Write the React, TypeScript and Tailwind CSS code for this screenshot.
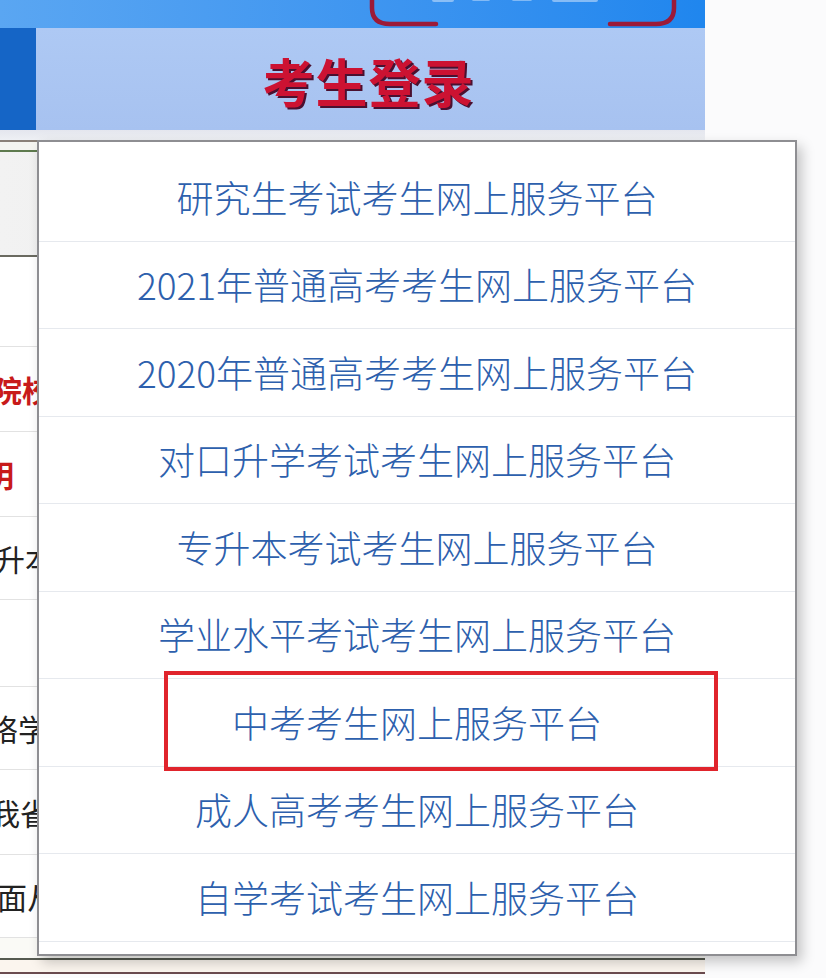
import React from "react";

const items = [
  "研究生考试考生网上服务平台",
  "2021年普通高考考生网上服务平台",
  "2020年普通高考考生网上服务平台",
  "对口升学考试考生网上服务平台",
  "专升本考试考生网上服务平台",
  "学业水平考试考生网上服务平台",
  "中考考生网上服务平台",
  "成人高考考生网上服务平台",
  "自学考试考生网上服务平台",
];

const cjk = { fontFamily: '"Noto Sans CJK SC", "Noto Sans", sans-serif' };

export default function App() {
  return (
    <div
      className="relative w-[826px] h-[978px] overflow-hidden bg-[#fbfbfc]"
      style={cjk}
    >
      {/* background page */}
      <div className="w-[705px]">
        {/* top bar */}
        <div className="relative h-[28px] bg-gradient-to-r from-[#5aa6f2] to-[#1f86ee]">
          <svg
            className="absolute left-[360px] top-0"
            width="330"
            height="28"
            viewBox="0 0 330 28"
          >
            <path
              d="M12 -4 L12 8 Q12 24 30 24 L76 24"
              fill="none"
              stroke="#9c1a38"
              strokeWidth="4.5"
              strokeLinecap="round"
            />
            <path
              d="M314 -4 L314 8 Q314 24 296 24 L250 24"
              fill="none"
              stroke="#9c1a38"
              strokeWidth="4.5"
              strokeLinecap="round"
            />
            <rect x="72" y="-2" width="22" height="4" rx="2" fill="#cfe4fb" opacity="0.55" />
            <rect x="112" y="-2" width="18" height="3" rx="1.5" fill="#cfe4fb" opacity="0.5" />
            <rect x="152" y="-2" width="20" height="3" rx="1.5" fill="#cfe4fb" opacity="0.5" />
            <rect x="192" y="-2" width="46" height="4" rx="2" fill="#cfe4fb" opacity="0.55" />
          </svg>
        </div>
        {/* banner */}
        <div className="flex h-[102px]">
          <div className="w-[36px] bg-[#1565c6]" />
          <div className="flex-1 flex items-center justify-center bg-gradient-to-b from-[#aec9f4] to-[#a7c2f0]">
            <span
              className="text-[52px] font-bold leading-none text-[#cc1232] tracking-[1px] mr-[4px] mt-[4px]"
              style={{ textShadow: "2px 2px 0 #4a1030" }}
            >
              考生登录
            </span>
          </div>
        </div>
        {/* gap */}
        <div className="h-[10px] bg-gradient-to-b from-[#e4e6ee] to-[#eef0f4]" />
        {/* table behind */}
        <div className="border-t-2 border-[#8a8078] bg-white">
          <div className="h-[10px] border-b-2 border-[#5e7a4e] bg-[#f4f4f0]" />
          <div className="h-[105px] border-b-2 border-[#6a6a60] bg-gradient-to-r from-[#f2f2f2] to-[#e6e6e6]" />
          <div className="h-[90px] border-b border-[#e2e2e2]" />
          <div className="h-[85px] border-b border-[#e2e2e2] flex items-center overflow-hidden">
            <span className="ml-[-8px] text-[30px] font-bold text-[#c81a1a] whitespace-nowrap">院校</span>
          </div>
          <div className="h-[85px] border-b border-[#e2e2e2] flex items-center overflow-hidden">
            <span className="ml-[-16px] text-[30px] font-bold text-[#c81a1a] whitespace-nowrap">明</span>
          </div>
          <div className="h-[83px] border-b border-[#e2e2e2] flex items-center overflow-hidden">
            <span className="ml-[-5px] text-[30px] text-[#222] whitespace-nowrap">升本</span>
          </div>
          <div className="h-[87px] border-b border-[#e2e2e2]" />
          <div className="h-[83px] border-b border-[#e2e2e2] flex items-center overflow-hidden">
            <span className="ml-[-12px] text-[30px] text-[#222] whitespace-nowrap">络学</span>
          </div>
          <div className="h-[85px] border-b border-[#e2e2e2] flex items-center overflow-hidden">
            <span className="ml-[-10px] text-[30px] text-[#222] whitespace-nowrap">我省</span>
          </div>
          <div className="h-[83px] border-b border-[#e2e2e2] flex items-center overflow-hidden">
            <span className="ml-[-3px] text-[30px] text-[#222] whitespace-nowrap">面从</span>
          </div>
          <div className="h-[22px] border-b-2 border-[#555a50] bg-[#fafaf6]" />
          <div className="h-[14px] border-b-2 border-[#6a4a4e] bg-[#fbf5ee]" />
        </div>
      </div>

      {/* dropdown */}
      <div className="absolute left-[37px] top-[140px] w-[760px] h-[816px] border-2 border-[#8e8e92] bg-white pt-[12px] shadow-[5px_6px_12px_rgba(0,0,0,0.22)]">
        {items.map((t) => (
          <div
            key={t}
            className="h-[87.5px] border-b border-[#e6e9ee] flex items-center justify-center"
          >
            <span className="text-[37px] font-light leading-none text-[#2d60ad] whitespace-nowrap">
              {t}
            </span>
          </div>
        ))}
      </div>

      {/* highlight */}
      <div className="absolute left-[164px] top-[671px] w-[554px] h-[100px] border-[4px] border-[#e0242c]" />
    </div>
  );
}
